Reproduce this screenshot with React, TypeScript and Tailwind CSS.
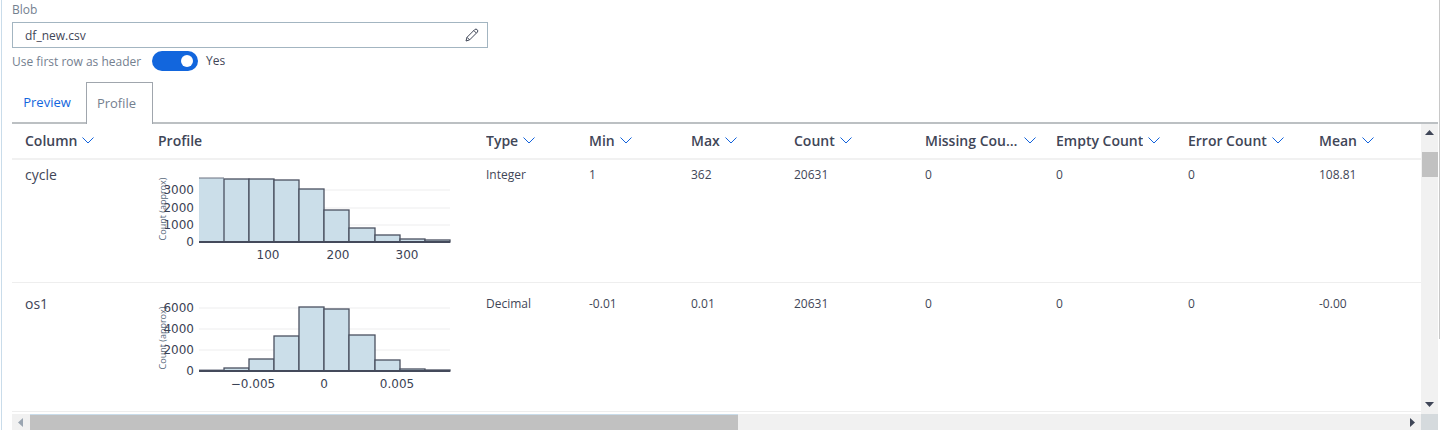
import React, { useState } from "react";

type Label = { at: number; text: string };

type HistogramProps = {
  title: string;
  tops: number[];
  yTicks: Label[];
  xTicks: Label[];
};

const EDGES = [41, 66, 91, 116, 141, 166, 191, 217, 242, 267, 292];
const BASE = 88;

function Histogram({ title, tops, yTicks, xTicks }: HistogramProps) {
  return (
    <svg
      role="img"
      aria-label={title}
      width="304"
      height="116"
      viewBox="-4 0 304 116"
      className="block overflow-visible font-['DejaVu_Sans',sans-serif] text-[12px]"
    >
      {yTicks.map((t) => (
        <line key={t.text} x1="41" x2="292" y1={t.at} y2={t.at} stroke="#ededee" />
      ))}
      {tops.map((top, i) => (
        <rect
          key={i}
          x={EDGES[i]}
          y={top}
          width={EDGES[i + 1] - EDGES[i]}
          height={BASE - top}
          fill="#cbdee9"
          stroke={i === 0 ? "none" : "#4a5060"}
          strokeWidth="1.3"
        />
      ))}
      <line x1="41" x2="66" y1={tops[0]} y2={tops[0]} stroke="#6b7180" />
      <line x1="41" x2="292" y1={BASE} y2={BASE} stroke="#444a5b" strokeWidth="2" />
      <text
        transform="translate(8 55) rotate(-90)"
        textAnchor="middle"
        fill="#56677a"
        className="font-['Open_Sans',sans-serif] text-[9px]"
      >
        Count (approx)
      </text>
      {yTicks.map((t) => (
        <text key={t.text} x="36" y={t.at + 4} textAnchor="end" fill="#3b4254">
          {t.text}
        </text>
      ))}
      {xTicks.map((t) => (
        <text key={t.text} x={t.at} y="105" textAnchor="middle" fill="#3b4254">
          {t.text}
        </text>
      ))}
    </svg>
  );
}

const COLUMNS = [
  { name: "Column", width: "w-[134px]", sortable: true },
  { name: "Profile", width: "w-[328px]", sortable: false },
  { name: "Type", width: "w-[103px]", sortable: true },
  { name: "Min", width: "w-[102px]", sortable: true },
  { name: "Max", width: "w-[103px]", sortable: true },
  { name: "Count", width: "w-[131px]", sortable: true },
  { name: "Missing Count", width: "w-[131px]", sortable: true },
  { name: "Empty Count", width: "w-[132px]", sortable: true },
  { name: "Error Count", width: "w-[131px]", sortable: true },
  { name: "Mean", width: "", sortable: true },
];

const ROWS = [
  {
    name: "cycle",
    values: ["Integer", "1", "362", "20631", "0", "0", "0", "108.81"],
    tops: [24, 25, 25, 26, 35, 56, 74, 81, 85, 86],
    yTicks: [
      { at: 36, text: "3000" },
      { at: 54, text: "2000" },
      { at: 71, text: "1000" },
      { at: 88, text: "0" },
    ],
    xTicks: [
      { at: 110, text: "100" },
      { at: 180, text: "200" },
      { at: 249, text: "300" },
    ],
  },
  {
    name: "os1",
    values: ["Decimal", "-0.01", "0.01", "20631", "0", "0", "0", "-0.00"],
    tops: [87, 85, 76, 53, 24, 26, 52, 77, 86, 87],
    yTicks: [
      { at: 25, text: "6000" },
      { at: 46, text: "4000" },
      { at: 67, text: "2000" },
      { at: 88, text: "0" },
    ],
    xTicks: [
      { at: 95, text: "−0.005" },
      { at: 166, text: "0" },
      { at: 239, text: "0.005" },
    ],
  },
];

function Chevron() {
  return (
    <svg width="12" height="8" viewBox="0 0 12 8" fill="none" className="shrink-0" aria-hidden="true">
      <path d="M0.5 0.5L6 6L11.5 0.5" stroke="#1162dc" strokeWidth="1" />
    </svg>
  );
}

function Pencil() {
  return (
    <svg width="14" height="14" viewBox="0 0 14 14" fill="none" stroke="#3f4657" strokeLinejoin="round" aria-hidden="true">
      <path d="M1 13L2 9.3L9.8 1.5Q11 0.5 12.2 1.7Q13.4 2.9 12.4 4.1L4.6 11.9Z" />
      <path d="M8.8 2.5L11.4 5.1M2 9.3L4.6 11.9" />
    </svg>
  );
}

const ARROWS = {
  up: "M0 5L4.5 0L9 5Z",
  down: "M0 0L4.5 5L9 0Z",
  left: "M5 0L0 4.5L5 9Z",
  right: "M0 0L5 4.5L0 9Z",
};

function ScrollArrow({ dir, color }: { dir: keyof typeof ARROWS; color: string }) {
  const vertical = dir === "up" || dir === "down";
  return (
    <button
      type="button"
      aria-label={"Scroll " + dir}
      className="flex h-4 w-4 shrink-0 items-center justify-center"
    >
      <svg width={vertical ? 9 : 5} height={vertical ? 5 : 9} aria-hidden="true">
        <path d={ARROWS[dir]} fill={color} />
      </svg>
    </button>
  );
}

export default function App() {
  const [header, setHeader] = useState(true);
  return (
    <div className="flex min-h-screen bg-white pl-px font-['Open_Sans',sans-serif] text-[#3f4657]">
      <main className="flex min-w-0 grow flex-col border-l border-[#c9dcea] pl-[10px]">
        <label htmlFor="blob" className="mt-px text-[12px] leading-[18px] text-[#74808f]">
          Blob
        </label>
        <div className="mt-[3px] flex h-[26px] w-full max-w-[476px] items-center border border-[#a3b5c1] pr-2">
          <input
            id="blob"
            defaultValue="df_new.csv"
            className="h-full min-w-0 grow bg-transparent px-3 text-[12px] outline-none"
          />
          <button type="button" aria-label="Edit">
            <Pencil />
          </button>
        </div>

        <div className="mt-[2px] flex h-[22px] items-center">
          <label htmlFor="first-row" className="w-[140px] pt-[2px] text-[12px] leading-[18px] text-[#74808f]">
            Use first row as header
          </label>
          <input
            id="first-row"
            type="checkbox"
            role="switch"
            checked={header}
            onChange={() => setHeader(!header)}
            className="peer sr-only"
          />
          <label
            htmlFor="first-row"
            className="flex h-5 w-[46px] items-center rounded-full bg-[#8a94a3] px-[5px] peer-checked:justify-end peer-checked:bg-[#1266dd]"
          >
            <span className="h-3 w-3 rounded-full bg-white" />
          </label>
          <span className="pl-2 text-[12px] leading-[18px]">{header ? "Yes" : "No"}</span>
        </div>

        <div role="tablist" className="mt-[10px] flex h-[42px] border-b-2 border-[#bcc0c3] text-[13px]">
          <button type="button" role="tab" aria-selected="false" className="w-[74px] pt-[2px] text-center text-[#1266dd]">
            <span className="pr-1">Preview</span>
          </button>
          <button
            type="button"
            role="tab"
            aria-selected="true"
            className="-mb-[2px] w-[67px] border border-b-0 border-[#a0a6ad] bg-white pr-[6px] text-center text-[#74808f]"
          >
            Profile
          </button>
        </div>

        <div className="flex grow">
          <div className="min-w-0 grow">
            <table className="w-full table-fixed border-collapse text-left">
              <thead>
                <tr className="h-[35px] border-b-2 border-[#f1f1f1]">
                  {COLUMNS.map((c) => (
                    <th key={c.name} scope="col" className={"pl-3 pr-2 font-semibold first:pl-[13px] " + c.width}>
                      <div className="flex items-center gap-[5px] text-[14px] leading-[18px]">
                        <span className="truncate">{c.name}</span>
                        {c.sortable && (
                          <button type="button" aria-label={"Sort by " + c.name} className="shrink-0">
                            <Chevron />
                          </button>
                        )}
                      </div>
                    </th>
                  ))}
                </tr>
              </thead>
              <tbody>
                {ROWS.map((r, i) => (
                  <tr
                    key={r.name}
                    className={"border-b border-[#eeeeee] align-top " + (i === 0 ? "h-[123px]" : "h-[129px]")}
                  >
                    <td className={"pl-[13px] text-[14px] leading-[18px] " + (i === 0 ? "pt-[6px]" : "pt-3")}>
                      {r.name}
                    </td>
                    <td className="pl-2">
                      <div className={i === 0 ? "-mt-[6px]" : ""}>
                        <Histogram
                          title={"Distribution of " + r.name}
                          tops={r.tops}
                          yTicks={r.yTicks}
                          xTicks={r.xTicks}
                        />
                      </div>
                    </td>
                    {r.values.map((v, j) => (
                      <td
                        key={j}
                        className={"pl-3 text-[12px] leading-[18px] " + (i === 0 ? "pt-[6px]" : "pt-3")}
                      >
                        {v}
                      </td>
                    ))}
                  </tr>
                ))}
              </tbody>
            </table>
          </div>
          <div className="flex w-[17px] shrink-0 flex-col items-center bg-[#f1f1f1]">
            <ScrollArrow dir="up" color="#3f4657" />
            <div className="mt-3 h-[25px] w-4 bg-[#c1c1c1]" />
            <div className="grow" />
            <ScrollArrow dir="down" color="#3f4657" />
            <div className="h-[2px]" />
          </div>
        </div>

        <div className="flex h-4 bg-[#f1f1f1]">
          <ScrollArrow dir="left" color="#9aa5b1" />
          <div className="ml-[2px] w-[49.65%] border-t border-[#c9dcea] bg-[#c1c1c1]" />
          <div className="grow" />
          <ScrollArrow dir="right" color="#3f4657" />
          <div className="ml-px w-[17px] bg-[#d5dadd]" />
        </div>
      </main>
      <div className="h-[339px] w-[2px] shrink-0 border-r border-[#c8c8c8]" />
    </div>
  );
}
